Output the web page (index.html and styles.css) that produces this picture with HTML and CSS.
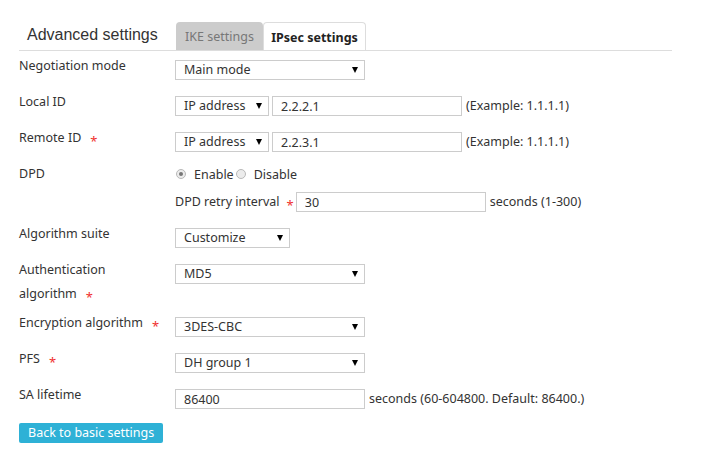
FILE: index.html
```html
<!DOCTYPE html>
<html>
<head>
<meta charset="utf-8">
<link rel="stylesheet" href="styles.css">
</head>
<body>
<div class="page">
  <div class="header">
    <div class="title">Advanced settings</div>
    <div class="tabs">
      <div class="tab tab-ike">IKE settings</div>
      <div class="tab tab-active">IPsec settings</div>
    </div>
  </div>

  <div class="form">
    <div class="row">
      <div class="label">Negotiation mode</div>
      <div class="field">
        <span class="sel w190"><select><option>Main mode</option></select></span>
      </div>
    </div>

    <div class="row">
      <div class="label">Local ID</div>
      <div class="field">
        <span class="sel w93"><select><option>IP address</option></select></span>
        <input class="text w190 gap3" type="text" value="2.2.2.1">
        <span class="hint">(Example: 1.1.1.1)</span>
      </div>
    </div>

    <div class="row">
      <div class="label">Remote ID<span class="req">*</span></div>
      <div class="field">
        <span class="sel w93"><select><option>IP address</option></select></span>
        <input class="text w190 gap3" type="text" value="2.2.3.1">
        <span class="hint">(Example: 1.1.1.1)</span>
      </div>
    </div>

    <div class="row">
      <div class="label">DPD</div>
      <div class="field field-stack">
        <div class="radios">
          <label class="radio-item"><input class="radio" type="radio" name="dpd" checked><span>Enable</span></label>
          <label class="radio-item"><input class="radio" type="radio" name="dpd"><span>Disable</span></label>
        </div>
        <div class="subline">
          <span class="sublabel">DPD retry interval<span class="req">*</span></span>
          <input class="text w190" type="text" value="30">
          <span class="hint">seconds (1-300)</span>
        </div>
      </div>
    </div>

    <div class="row">
      <div class="label">Algorithm suite</div>
      <div class="field">
        <span class="sel w115"><select><option>Customize</option></select></span>
      </div>
    </div>

    <div class="row row-tall">
      <div class="label">Authentication<br>algorithm<span class="req">*</span></div>
      <div class="field">
        <span class="sel w190"><select><option>MD5</option></select></span>
      </div>
    </div>

    <div class="row">
      <div class="label">Encryption algorithm<span class="req">*</span></div>
      <div class="field">
        <span class="sel w190"><select><option>3DES-CBC</option></select></span>
      </div>
    </div>

    <div class="row">
      <div class="label">PFS<span class="req">*</span></div>
      <div class="field">
        <span class="sel w190"><select><option>DH group 1</option></select></span>
      </div>
    </div>

    <div class="row">
      <div class="label">SA lifetime</div>
      <div class="field">
        <input class="text w190" type="text" value="86400">
        <span class="hint">seconds (60-604800. Default: 86400.)</span>
      </div>
    </div>

    <div class="actions">
      <button class="btn" type="button">Back to basic settings</button>
    </div>
  </div>
</div>
</body>
</html>
```

FILE: styles.css
```css
* {
  box-sizing: border-box;
}

body {
  margin: 0;
  background: #fff;
  color: #333;
  font-family: "Noto Sans", "Open Sans", sans-serif;
  font-size: 12.5px;
}

.page {
  margin-left: 19px;
  width: 653px;
}

/* header + tabs */
.header {
  display: flex;
  align-items: flex-end;
  height: 51px;
  border-bottom: 1px solid #ddd;
}

.title {
  width: 157px;
  padding-left: 8px;
  margin-bottom: 5px;
  font-family: "Liberation Sans", Arial, sans-serif;
  font-size: 16px;
  line-height: 20px;
  color: #333;
}

.tabs {
  display: flex;
  align-items: flex-end;
}

.tab {
  height: 28px;
  padding-top: 2px;
  line-height: 26px;
  text-align: center;
  border-radius: 4px 4px 0 0;
  font-size: 12.5px;
}

.tab-ike {
  width: 87px;
  background: #cccccc;
  color: #777;
}

.tab-active {
  width: 103px;
  background: #fff;
  border: 1px solid #ddd;
  border-bottom: none;
  font-weight: bold;
  color: #222;
}

/* form */
.form {
  padding-top: 3px;
}

.row {
  display: flex;
  align-items: flex-start;
  margin-bottom: 10px;
}

.row-tall {
  margin-bottom: 5px;
}

.label {
  width: 156px;
  flex: none;
  line-height: 24px;
}

.field {
  display: flex;
  align-items: center;
  padding-top: 6px;
}

.field-stack {
  flex-direction: column;
  align-items: flex-start;
  padding-top: 0;
}

.req {
  display: inline-block;
  margin-left: 9px;
  color: #f0302e;
  font-size: 13px;
  vertical-align: -4px;
  line-height: 1;
}

.sel {
  position: relative;
  display: inline-block;
  height: 20px;
}

.sel::after {
  content: "";
  position: absolute;
  right: 7px;
  top: 7px;
  border-left: 3.5px solid transparent;
  border-right: 3.5px solid transparent;
  border-top: 6px solid #000;
  pointer-events: none;
}

.sel select {
  -webkit-appearance: none;
  appearance: none;
  width: 100%;
  height: 20px;
  margin: 0;
  padding: 0 18px 0 8px;
  border: 1px solid #ccc;
  border-radius: 0;
  background: #fff;
  color: #333;
  font: inherit;
  line-height: 18px;
}

.text {
  height: 20px;
  margin: 0;
  padding: 0 8px;
  border: 1px solid #ccc;
  border-radius: 0;
  background: #fff;
  color: #333;
  font: inherit;
  line-height: 18px;
  outline: none;
}

.w190 { width: 190px; }
.w93 { width: 94px; }
.w115 { width: 115px; }

.gap3 {
  margin-left: 3px;
}

.hint {
  margin-left: 4px;
  line-height: 20px;
  white-space: nowrap;
}

/* radios */
.radios {
  display: flex;
  align-items: center;
  height: 24px;
  padding-left: 1px;
}

.radio-item {
  display: flex;
  align-items: center;
}

.radio-item + .radio-item {
  margin-left: 2px;
}

.radio {
  -webkit-appearance: none;
  appearance: none;
  position: relative;
  width: 10px;
  height: 10px;
  margin: 0 8px 0 0;
  border: 1px solid #b9b9b9;
  border-radius: 50%;
  background: #ececec;
}

.radio:checked::after {
  content: "";
  position: absolute;
  left: 2px;
  top: 2px;
  width: 4px;
  height: 4px;
  border-radius: 50%;
  background: #777;
}

.subline {
  display: flex;
  align-items: center;
  margin-top: 6px;
}

.sublabel {
  margin-right: 2px;
  line-height: 20px;
}

.sublabel .req {
  margin-left: 7px;
}

/* actions */
.actions {
  padding-top: 4px;
}

.btn {
  height: 20px;
  padding: 0 9px;
  border: none;
  border-radius: 2px;
  background: #2eb1d6;
  color: #fff;
  font: inherit;
  font-size: 12.5px;
  line-height: 20px;
  cursor: pointer;
}
```
